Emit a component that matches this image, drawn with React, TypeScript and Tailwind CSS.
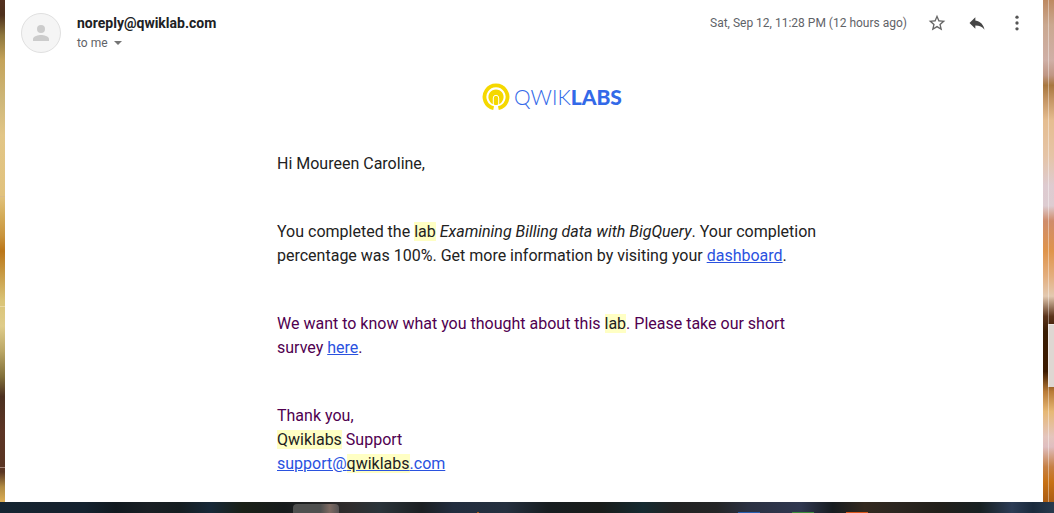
import type { ReactNode } from "react";

function Mark({ children }: { children: ReactNode }) {
  return <mark className="bg-[#ffffc4] text-[#222222]">{children}</mark>;
}

function Logo() {
  return (
    <div className="flex h-[26px] items-center justify-center gap-1">
      <svg viewBox="0 0 28 28" className="h-7 w-7" aria-hidden="true">
        <path
          d="M11.600 25.200A11.500 11.500 0 1 1 16.400 25.200"
          fill="none"
          stroke="#f5d800"
          strokeWidth="3.800"
        />
        <path
          d="M11.500 21.300A7.600 7.600 0 1 1 16.500 21.300Z"
          fill="#f5d800"
        />
        <path
          d="M11.300 22V15a2.700 2.700 0 0 1 5.400 0V22"
          fill="none"
          stroke="#ffffff"
          strokeWidth="1"
        />
        <path d="M12.300 14.500h3.400V22h-3.400Z" fill="#f5d800" />
      </svg>
      <span className="font-['Lato',sans-serif] text-[21px] leading-6 font-light text-[#3369e8]">
        QWIK<span className="font-black">LABS</span>
      </span>
    </div>
  );
}

function Header() {
  return (
    <header className="flex items-start gap-4">
      <div className="mt-[13px] flex size-10 shrink-0 items-center justify-center rounded-full border border-[#e0e0e0] bg-[#f5f5f5]">
        <svg viewBox="0 0 16 16" className="size-4" fill="#cccccc" aria-hidden="true">
          <circle cx="8" cy="4" r="4" />
          <path d="M0 16v-2c0-2.700 5.300-4 8-4s8 1.300 8 4v2Z" />
        </svg>
      </div>
      <div className="mt-[13px] flex-1">
        <h1 className="text-sm leading-5 font-bold text-[#202124]">noreply@qwiklab.com</h1>
        <button type="button" className="flex items-center gap-1 text-xs leading-5 text-[#5f6368]">
          to me
          <svg viewBox="0 0 12 12" className="size-3" fill="#757575" aria-hidden="true">
            <path d="M2 4h8L6 8Z" />
          </svg>
        </button>
      </div>
      <div className="mt-[13px] flex items-center">
        <time className="mr-5 text-xs leading-5 text-[#5f6368]">
          Sat, Sep 12, 11:28 PM (12 hours ago)
        </time>
        <div className="flex gap-5">
          <button type="button" aria-label="Star">
            <svg viewBox="0 0 24 24" className="size-5" fill="#666666" aria-hidden="true">
              <path d="M22 9.240l-7.190-.62L12 2 9.190 8.630 2 9.240l5.460 4.730L5.820 21 12 17.270 18.180 21l-1.630-7.030L22 9.240zM12 15.400l-3.760 2.270 1-4.280-3.320-2.880 4.380-.38L12 6.100l1.710 4.040 4.380.38-3.320 2.880 1 4.280L12 15.400z" />
            </svg>
          </button>
          <button type="button" aria-label="Reply">
            <svg viewBox="0 0 24 24" className="size-5" fill="#454545" aria-hidden="true">
              <path d="M10 9V5l-7 7 7 7v-4.100c5 0 8.500 1.600 11 5.100-1-5-4-10-11-11z" />
            </svg>
          </button>
          <button type="button" aria-label="More">
            <svg viewBox="0 0 24 24" className="size-5" fill="#555555" aria-hidden="true">
              <circle cx="12" cy="5" r="2" />
              <circle cx="12" cy="12" r="2" />
              <circle cx="12" cy="19" r="2" />
            </svg>
          </button>
        </div>
      </div>
    </header>
  );
}

function Message() {
  const link = "text-[#2a52df] underline";
  return (
    <article className="pt-[31px] pb-[25px] pl-14">
      <div className="mx-auto max-w-[550px] text-base leading-6 text-[#222222]">
        <Logo />
        <p className="mt-[42px]">Hi Moureen Caroline,</p>
        <p className="mt-11">
          You completed the <Mark>lab</Mark> <em>Examining Billing data with BigQuery</em>. Your
          completion percentage was 100%. Get more information by visiting your{" "}
          <a href="#dashboard" className={link}>
            dashboard
          </a>
          .
        </p>
        <div className="text-[#500050]">
          <p className="mt-11">
            We want to know what you thought about this <Mark>lab</Mark>. Please take our short
            survey{" "}
            <a href="#survey" className={link}>
              here
            </a>
            .
          </p>
          <p className="mt-11">
            Thank you,
            <br />
            <Mark>Qwiklabs</Mark> Support
            <br />
            <a href="#support" className={link}>
              support@<Mark>qwiklabs</Mark>.com
            </a>
          </p>
        </div>
      </div>
    </article>
  );
}

function Taskbar() {
  return (
    <footer className="relative h-[11px] overflow-hidden bg-[linear-gradient(90deg,#142532_0%,#16222e_5%,#14222f_8%,#11191f_11%,#191f24_14%,#151d20_17%,#172838_20%,#1a2017_23%,#171b1c_27%,#2f2c2c_33%,#2b343a_36%,#1b1f22_40%,#222d3e_43%,#25303f_48%,#171d20_52%,#191c1a_57%,#152a30_61%,#222222_64%,#242526_68%,#2b3142_71%,#303850_76%,#171c20_79%,#33291f_82%,#2c2620_85%,#221f1a_89%,#172022_93%,#2c3c55_96%,#1a2a3c_98%,#283a4d_100%)]">
      <div className="absolute top-[2px] left-[293px] h-3 w-[46px] rounded-t bg-[linear-gradient(90deg,#4f504f_60%,#7d6a62_80%,#555253)]" />
      <div className="absolute bottom-0 left-[477px] h-px w-[2px] bg-[#ad5b16]" />
      <div className="absolute bottom-0 left-[738px] h-px w-[22px] bg-[#285fae]" />
      <div className="absolute bottom-0 left-[792px] h-px w-[22px] bg-[#3d8c3d]" />
      <div className="absolute bottom-0 left-[846px] h-px w-[22px] bg-[#dc5519]" />
    </footer>
  );
}

export default function App() {
  return (
    <div className="flex min-h-screen flex-col font-['Roboto',sans-serif]">
      <div className="flex flex-1">
        <div className="relative w-[5px] shrink-0 bg-[linear-gradient(180deg,#54301f_0%,#4e301c_3%,#8d763d_7%,#c4a35a_12%,#ceb779_20%,#e2c687_27%,#e1c27d_39%,#d4ac58_43%,#c9943d_47%,#bb7618_50%,#c99e48_55%,#dac477_60%,#dfcc8a_65%,#baa665_70%,#82703a_75%,#4c3020_79%,#5d3525_86%,#593522_94%,#b18b43_97%,#dcae55_100%)]">
          <div className="absolute top-[39%] h-px w-full bg-[#d9ba87]" />
          <div className="absolute top-[61%] h-px w-full bg-[#e9d7a0]" />
          <div className="absolute top-[93%] h-px w-full bg-[#a08073]" />
        </div>
        <main className="min-w-0 flex-1 bg-white px-4">
          <Header />
          <Message />
        </main>
        <div className="relative w-[11px] shrink-0 bg-[linear-gradient(180deg,#bd8961_0%,#caa890_5%,#cfafa6_12%,#bf9684_15%,#a8773f_17%,#c59665_20%,#e5bd90_24%,#e5c4a6_31%,#decbd0_37%,#ddccd1_41%,#cf8c6b_44%,#df944b_50%,#e3ae7d_55%,#e3c9b0_59%,#5b341b_63%,#3a1d04_66%,#3c1a00_74%,#b97b37_78%,#e6b875_82%,#e4c5bd_87%,#dfbec0_89%,#c68045_93%,#c77115_96%,#a95c12_100%)]">
          <div className="absolute inset-y-0 left-[5px] w-px bg-white/40" />
          <div className="absolute right-0 bottom-[115px] h-[63px] w-[6px] border-t border-l border-[#eeeae7] bg-[#ded7d2]" />
        </div>
      </div>
      <Taskbar />
    </div>
  );
}
